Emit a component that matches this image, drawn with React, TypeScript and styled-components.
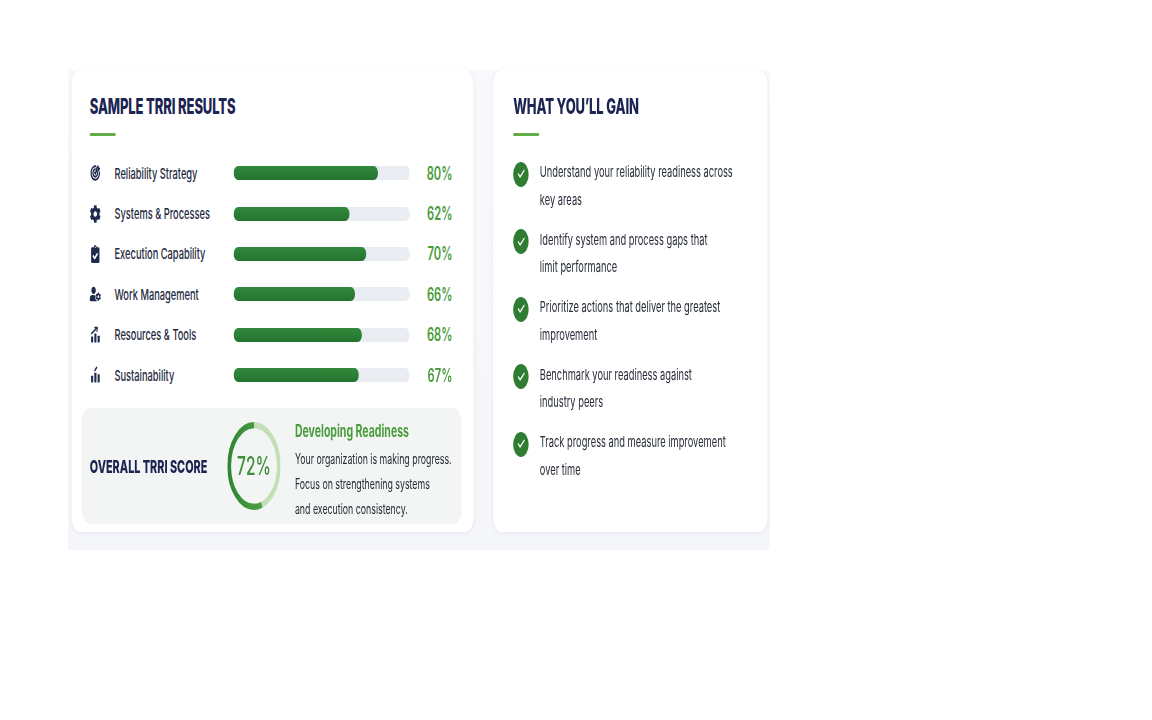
import React from 'react';
import styled, { createGlobalStyle } from 'styled-components';
import { TbTargetArrow } from 'react-icons/tb';
import { FaCog, FaClipboardCheck, FaUserCog } from 'react-icons/fa';
import { Check } from 'lucide-react';

// the reference is squeezed horizontally, so the board is laid out wide and narrowed once
const SQUEEZE = 0.62;

const GlobalStyle = createGlobalStyle`
  html, body {
    margin: 0;
    padding: 0;
    background: #ffffff;
  }
  body {
    font-family: Inter, "Noto Sans", "Liberation Sans", sans-serif;
    -webkit-font-smoothing: antialiased;
  }
`;

const Page = styled.div`
  height: 720px;
  padding: 70px 0 0 68px;
  box-sizing: border-box;
  overflow: hidden;
`;

const Stage = styled.div`
  width: 1132px;
  transform: scaleX(${SQUEEZE});
  transform-origin: left top;
`;

const Section = styled.section`
  display: flex;
  align-items: stretch;
  gap: 32px;
  padding: 0 3px 18px 6px;
  background: linear-gradient(180deg, #f8f9fc 0%, #f4f6fa 100%);
`;

const Card = styled.div<{ $width: number }>`
  width: ${({ $width }) => $width}px;
  box-sizing: border-box;
  background: #ffffff;
  border-radius: 14px;
  box-shadow: 0 1px 6px rgba(20, 30, 60, 0.06);
`;

const LeftCard = styled(Card)`
  padding: 25px 19px 8px 16px;
`;

const RightCard = styled(Card)`
  padding: 25px 20px 20px 32px;
`;

const Head = styled.div<{ $inset?: boolean }>`
  padding: ${({ $inset }) => ($inset ? '0 15px 0 13px' : '0')};
`;

const Title = styled.h2`
  margin: 0;
  font-size: 21px;
  line-height: 24px;
  font-weight: 800;
  color: #1c2452;
  letter-spacing: -0.2px;
`;

const Accent = styled.div`
  width: 42px;
  height: 3px;
  margin-top: 14px;
  border-radius: 2px;
  background: #62ad47;
`;

const Rows = styled.div`
  margin-top: 17px;
  padding: 0 15px 0 13px;
`;

const Row = styled.div`
  display: grid;
  grid-template-columns: 40px 192px 284px 1fr;
  align-items: center;
  height: 40.4px;
`;

const IconBox = styled.span`
  display: flex;
  align-items: center;
  color: #1f2a4f;
  font-size: 18px;
`;

const Label = styled.span`
  font-size: 15px;
  font-weight: 500;
  color: #232a3e;
  white-space: nowrap;
`;

const Track = styled.div`
  height: 14px;
  border-radius: 7px;
  background: #e9edf2;
  overflow: hidden;
`;

const Fill = styled.div`
  height: 100%;
  border-radius: 7px;
  background: linear-gradient(180deg, #31893c 0%, #24742f 100%);
`;

const Pct = styled.span`
  text-align: right;
  font-size: 18px;
  font-weight: 600;
  color: #4a9c3c;
`;

const ScoreBox = styled.div`
  display: flex;
  align-items: center;
  height: 116px;
  margin-top: 13px;
  padding: 0 13px;
  box-sizing: border-box;
  border-radius: 14px;
  background: #f3f5f4;
`;

const ScoreLabel = styled.div`
  width: 222px;
  flex-shrink: 0;
  font-size: 17.5px;
  font-weight: 800;
  color: #1c2452;
  white-space: nowrap;
`;

const Ring = styled.div`
  position: relative;
  width: 86px;
  height: 88px;
  flex-shrink: 0;

  svg {
    display: block;
  }
`;

const RingValue = styled.span`
  position: absolute;
  inset: 0;
  display: flex;
  align-items: center;
  justify-content: center;
  font-size: 25px;
  font-weight: 500;
  color: #3f8c37;
`;

const ScoreText = styled.div`
  margin: 8px 0 0 23px;
  white-space: nowrap;
`;

const ScoreTitle = styled.div`
  font-size: 17px;
  line-height: 22px;
  font-weight: 700;
  color: #4a9c3c;
`;

const ScoreBody = styled.p`
  margin: 4.5px 0 0;
  font-size: 14.2px;
  line-height: 25px;
  color: #262a33;
`;

const GainList = styled.ul`
  list-style: none;
  margin: 22px 0 0;
  padding: 0;
  display: flex;
  flex-direction: column;
  gap: 12.5px;
`;

const GainItem = styled.li`
  display: flex;
  align-items: flex-start;
  gap: 18px;
`;

const CheckDot = styled.span`
  display: flex;
  align-items: center;
  justify-content: center;
  width: 25px;
  height: 25px;
  margin-top: 3.5px;
  flex-shrink: 0;
  border-radius: 50%;
  background: #2e7d32;
  color: #ffffff;
`;

const GainText = styled.span`
  font-size: 15px;
  line-height: 27.5px;
  color: #272c38;
`;

const RisingBars = () => (
  <svg width="18" height="18" viewBox="0 0 24 24" fill="currentColor">
    <rect x="3" y="14" width="4.5" height="8" rx="0.6" />
    <rect x="10" y="10" width="4.5" height="12" rx="0.6" />
    <rect x="17" y="13" width="4.5" height="9" rx="0.6" />
    <path d="M4 10 L15 3" stroke="currentColor" strokeWidth="2.4" strokeLinecap="round" fill="none" />
    <path d="M11 2.2 L16.5 2 L15.6 7" stroke="currentColor" strokeWidth="2.2" strokeLinecap="round" strokeLinejoin="round" fill="none" />
  </svg>
);

const GrowthBars = () => (
  <svg width="18" height="18" viewBox="0 0 24 24" fill="currentColor">
    <rect x="3" y="13" width="4.5" height="9" rx="0.6" />
    <rect x="10" y="9" width="4.5" height="13" rx="0.6" />
    <rect x="17" y="11" width="4.5" height="11" rx="0.6" />
    <path d="M11 6 L15 2" stroke="currentColor" strokeWidth="2.4" strokeLinecap="round" fill="none" />
  </svg>
);

const results = [
  { icon: <TbTargetArrow strokeWidth={2.6} />, label: 'Reliability Strategy', pct: 80, fill: 82 },
  { icon: <FaCog />, label: 'Systems & Processes', pct: 62, fill: 66 },
  { icon: <FaClipboardCheck />, label: 'Execution Capability', pct: 70, fill: 75.5 },
  { icon: <FaUserCog />, label: 'Work Management', pct: 66, fill: 69 },
  { icon: <RisingBars />, label: 'Resources & Tools', pct: 68, fill: 73 },
  { icon: <GrowthBars />, label: 'Sustainability', pct: 67, fill: 71 },
];

const gains = [
  ['Understand your reliability readiness across', 'key areas'],
  ['Identify system and process gaps that', 'limit performance'],
  ['Prioritize actions that deliver the greatest', 'improvement'],
  ['Benchmark your readiness against', 'industry peers'],
  ['Track progress and measure improvement', 'over time'],
];

const ScoreRing = ({ value }: { value: number }) => {
  const r = 40;
  const c = 2 * Math.PI * r;
  const dark = c * 0.55;
  return (
    <Ring>
      <svg width="86" height="88" viewBox="0 0 86 86" preserveAspectRatio="none">
        <defs>
          <linearGradient id="ringDark" x1="0" y1="0" x2="0" y2="1">
            <stop offset="0%" stopColor="#5fae4f" />
            <stop offset="100%" stopColor="#2f8632" />
          </linearGradient>
        </defs>
        <circle cx="43" cy="43" r={r} fill="none" stroke="#c3dfb8" strokeWidth="6" />
        <circle
          cx="43"
          cy="43"
          r={r}
          fill="none"
          stroke="url(#ringDark)"
          strokeWidth="6"
          strokeDasharray={`${dark} ${c}`}
          transform="rotate(-90 43 43) scale(1 -1) translate(0 -86)"
        />
      </svg>
      <RingValue>{value}%</RingValue>
    </Ring>
  );
};

const App = () => {
  return (
    <Page>
      <GlobalStyle />
      <Stage>
        <Section>
          <LeftCard $width={648}>
            <Head $inset>
              <Title>SAMPLE TRRI RESULTS</Title>
              <Accent />
            </Head>
            <Rows>
              {results.map((item) => (
                <Row key={item.label}>
                  <IconBox>{item.icon}</IconBox>
                  <Label>{item.label}</Label>
                  <Track>
                    <Fill style={{ width: `${item.fill}%` }} />
                  </Track>
                  <Pct>{item.pct}%</Pct>
                </Row>
              ))}
            </Rows>
            <ScoreBox>
              <ScoreLabel>OVERALL TRRI SCORE</ScoreLabel>
              <ScoreRing value={72} />
              <ScoreText>
                <ScoreTitle>Developing Readiness</ScoreTitle>
                <ScoreBody>
                  Your organization is making progress.
                  <br />
                  Focus on strengthening systems
                  <br />
                  and execution consistency.
                </ScoreBody>
              </ScoreText>
            </ScoreBox>
          </LeftCard>

          <RightCard $width={442}>
            <Head>
              <Title>WHAT YOU&rsquo;LL GAIN</Title>
              <Accent />
            </Head>
            <GainList>
              {gains.map(([first, second]) => (
                <GainItem key={first}>
                  <CheckDot>
                    <Check size={14} strokeWidth={3} />
                  </CheckDot>
                  <GainText>
                    {first}
                    <br />
                    {second}
                  </GainText>
                </GainItem>
              ))}
            </GainList>
          </RightCard>
        </Section>
      </Stage>
    </Page>
  );
};

export default App;
